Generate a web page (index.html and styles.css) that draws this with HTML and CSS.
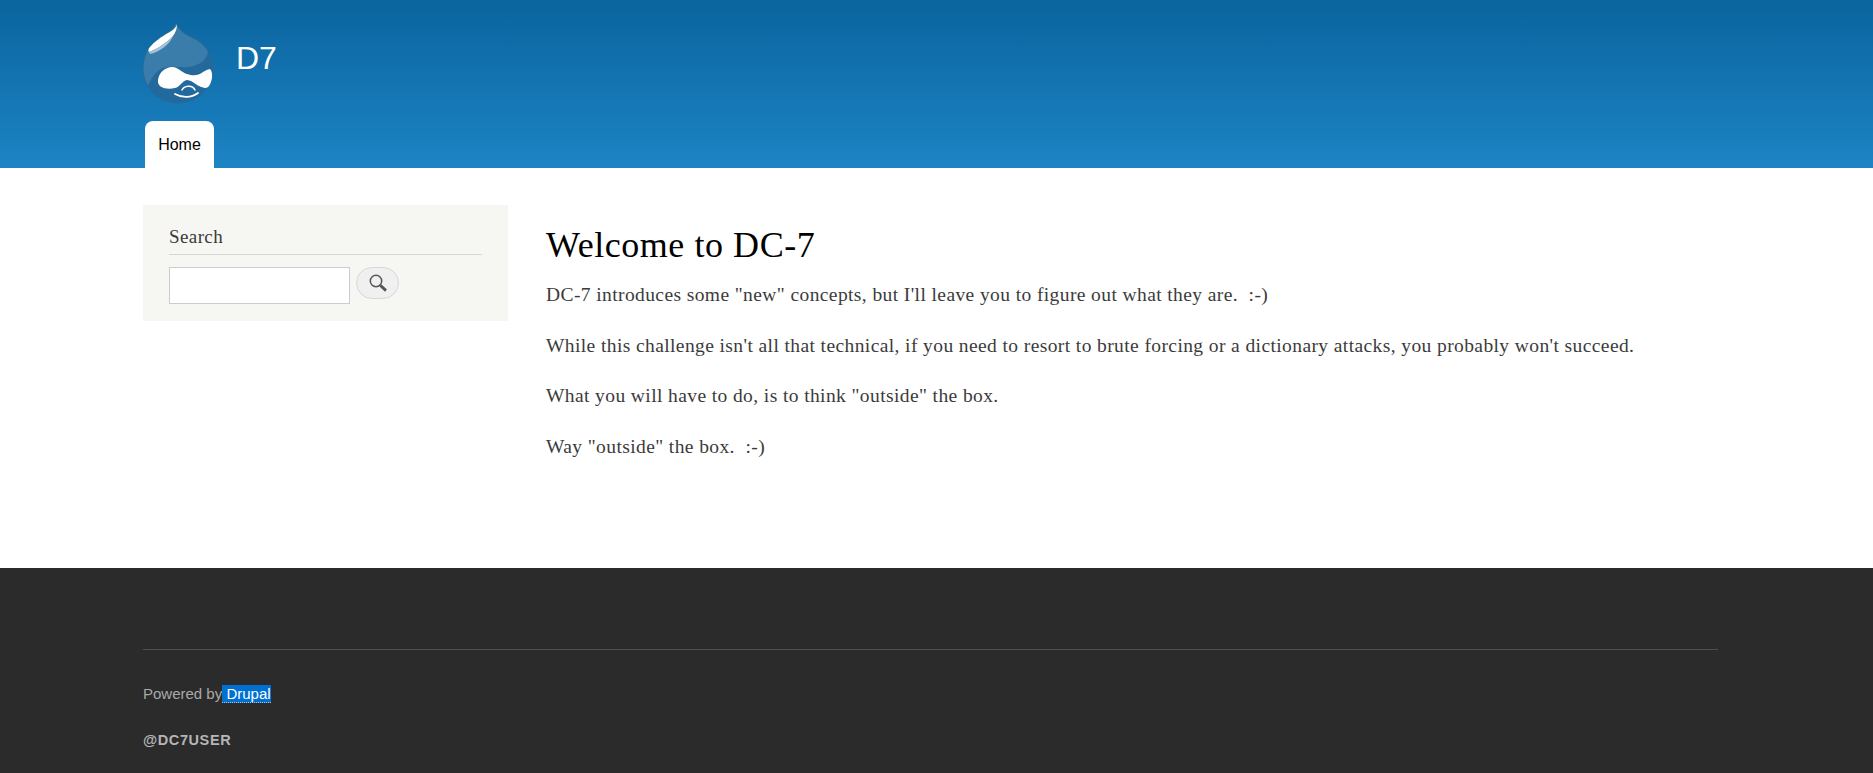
FILE: index.html
```html
<!DOCTYPE html>
<html lang="en">
<head>
    <meta charset="UTF-8">
    <title>Welcome to DC-7 | D7</title>
    <link rel="stylesheet" href="styles.css">
</head>
<body>

    <!-- Header -->
    <header class="site-header">
        <div class="wrap">
            <div class="branding">
                <svg class="logo" width="72" height="82" viewBox="0 0 72 82">
                    <defs>
                        <clipPath id="dropClip">
                            <path d="M33 1C35 6 38 9 44 13C50 16 55 18 59 22C66 28 70 37 70 46C70 66 54 81 35 81C16 81 0 66 0 46C0 36 4 28 9 23C14 18 20 15 25 11C29 8 32 5 33 1Z"/>
                        </clipPath>
                    </defs>
                    <path d="M33 1C35 6 38 9 44 13C50 16 55 18 59 22C66 28 70 37 70 46C70 66 54 81 35 81C16 81 0 66 0 46C0 36 4 28 9 23C14 18 20 15 25 11C29 8 32 5 33 1Z" fill="#3a7dab" stroke="#2b6a95" stroke-width="1"/>
                    <g clip-path="url(#dropClip)">
                        <path d="M65 26C66 36 58 43 46 45C36 46 26 43 18 47C11 51 6 59 3 70L0 84L72 84L72 26Z" fill="#23699b"/>
                    </g>
                    <path d="M34 2C33 6 30 8 25 11C18 15 11 20 7 25C5 27 5 29 6 30C14 27 24 21 30 14C33 10 34 6 34 2Z" fill="#fff"/>
                    <path d="M6 30C14 27 24 21 30 14C27 22 17 30 7 32Z" fill="#a3c2d8"/>
                    <path d="M15 58C16 50 23 45 29 45C35 45 38 50 44 52C50 54 55 54 60 50C63 48 66 47 67 47C70 50 70 58 66 64C64 67 60 66 56 64C52 62 48 58 44 58C39 59 37 65 32 66C24 68 14 66 15 58Z" fill="#fff"/>
                    <path d="M39 68C41 64 49 62 52 68" fill="none" stroke="#fff" stroke-width="1.5" stroke-linecap="round"/>
                    <path d="M32 72C39 76 48 76 55 71" fill="none" stroke="#fff" stroke-width="1.8" stroke-linecap="round"/>
                </svg>
                <div class="site-name">D7</div>
            </div>
            <nav class="main-menu">
                <a class="tab" href="#">Home</a>
            </nav>
        </div>
    </header>

    <!-- Main -->
    <main class="wrap main-cols">
        <aside class="sidebar">
            <h2 class="block-title">Search</h2>
            <form class="search-form">
                <input class="search-input" type="text">
                <button class="search-btn" type="button" aria-label="Search">
                    <svg width="20" height="20" viewBox="0 0 20 20">
                        <circle cx="8" cy="8" r="5.7" fill="none" stroke="#555" stroke-width="1.5"/>
                        <path d="M12.4 12.4L18 17.6" stroke="#555" stroke-width="2.8"/>
                    </svg>
                </button>
            </form>
        </aside>
        <section class="content">
            <h1 class="page-title">Welcome to DC-7</h1>
            <p>DC-7 introduces some "new" concepts, but I'll leave you to figure out what they are.&nbsp; :-)</p>
            <p>While this challenge isn't all that technical, if you need to resort to brute forcing or a dictionary attacks, you probably won't succeed.</p>
            <p>What you will have to do, is to think "outside" the box.</p>
            <p>Way "outside" the box.&nbsp; :-)</p>
        </section>
    </main>

    <!-- Footer -->
    <footer class="site-footer">
        <div class="wrap">
            <div class="footer-inner">
                <p class="powered">Powered by<a class="drupal-link" href="#">&nbsp;Drupal</a></p>
                <p class="footer-user">@DC7USER</p>
            </div>
        </div>
    </footer>

</body>
</html>
```

FILE: styles.css
```css
html, body {
    margin: 0;
    padding: 0;
}
body {
    font-family: "Liberation Serif", Georgia, serif;
    font-size: 19.5px;
    letter-spacing: 0.4px;
    color: #3b3b3b;
    background: #fff;
    height: 773px;
    overflow: hidden;
}
.wrap {
    width: 1575px;
    margin-left: 143px;
}
.site-header {
    height: 168px;
    background: linear-gradient(to bottom, #0a649e, #1d84c4);
    letter-spacing: 0;
}
.branding {
    display: flex;
    height: 121px;
}
.logo {
    margin-top: 22px;
    flex-shrink: 0;
}
.site-name {
    font-family: "Liberation Sans", Arial, sans-serif;
    font-size: 32px;
    color: #fff;
    margin-left: 21px;
    margin-top: 40px;
    line-height: 36px;
}
.main-menu {
    display: flex;
    padding-left: 2px;
}
.tab {
    display: block;
    width: 69px;
    height: 47px;
    line-height: 48px;
    text-align: center;
    background: #fff;
    color: #000;
    font-family: "Liberation Sans", Arial, sans-serif;
    font-size: 16px;
    text-decoration: none;
    border-radius: 8px 8px 0 0;
}
.main-cols {
    display: flex;
    height: 400px;
}
.sidebar {
    width: 365px;
    height: 116px;
    margin-top: 37px;
    padding: 19px 26px 0;
    box-sizing: border-box;
    background: #f6f6f2;
    flex-shrink: 0;
}
.block-title {
    margin: 0;
    font-size: 19px;
    font-weight: normal;
    line-height: 26px;
    height: 30px;
    color: #3b3b3b;
    border-bottom: 1px solid #d6d6d6;
}
.search-form {
    display: flex;
    align-items: flex-start;
    margin-top: 12px;
}
.search-input {
    width: 181px;
    height: 37px;
    padding: 0;
    box-sizing: border-box;
    border: 1px solid #ccc;
    background: #fff;
}
.search-btn {
    display: flex;
    align-items: center;
    justify-content: center;
    width: 43px;
    height: 32px;
    margin-left: 6px;
    padding: 0;
    background: #f0f0f0;
    border: 1px solid #d8d8d8;
    border-radius: 16px;
}
.content {
    margin-left: 38px;
    padding-top: 54px;
    flex: 1;
}
.page-title {
    margin: 0 0 14px;
    font-size: 36px;
    font-weight: normal;
    line-height: 46px;
    letter-spacing: 0.55px;
    color: #000;
}
.content p {
    margin: 0 0 24.5px;
    line-height: 26px;
}
.site-footer {
    height: 205px;
    background: #2b2b2b;
    color: #c0c0c0;
    font-family: "Liberation Sans", Arial, sans-serif;
    font-size: 15px;
    letter-spacing: 0;
}
.footer-inner {
    padding-top: 81px;
    position: relative;
}
.footer-inner::before {
    content: "";
    position: absolute;
    top: 81px;
    left: 0;
    right: 0;
    border-top: 1px solid #4f4f4f;
}
.powered {
    margin: 0;
    padding-top: 36px;
    line-height: 18px;
    color: #a9a9a9;
}
.drupal-link {
    background: #0071d0;
    color: #fff;
    text-decoration: none;
    border-bottom: 1px dotted #bbb;
}
.footer-user {
    margin: 28px 0 0;
    font-weight: bold;
    font-size: 14.5px;
    letter-spacing: 0.6px;
    line-height: 18px;
    color: #b5b5b5;
}
```
